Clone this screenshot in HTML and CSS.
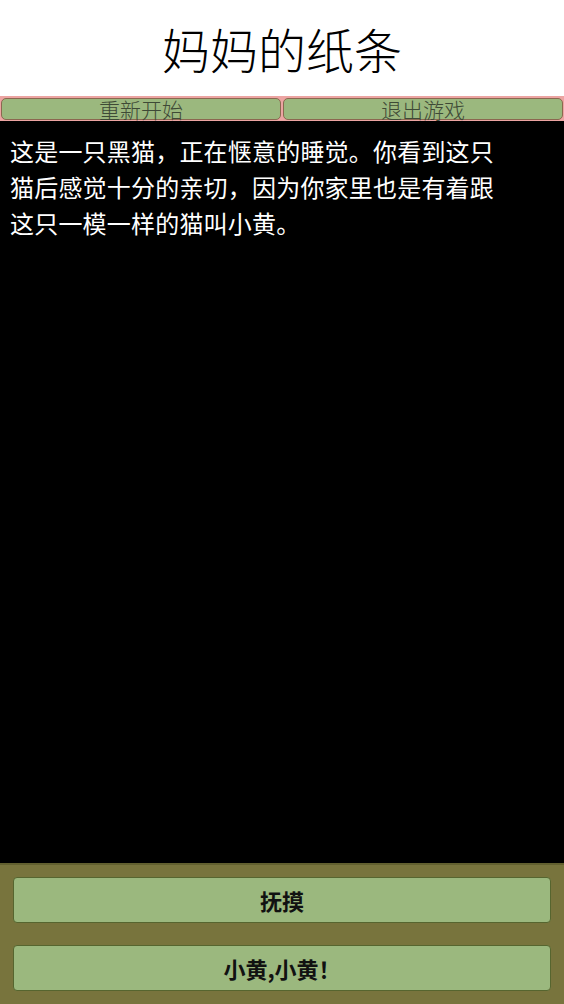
FILE: index.html
```html
<!DOCTYPE html>
<html lang="zh-CN">

<head>
    <meta charset="UTF-8">
    <meta name="viewport" content="width=device-width, initial-scale=1.0">
    <title>妈妈的纸条</title>
    <link rel="stylesheet" href="styles.css">
</head>

<body>
    <div class="game">
        <h1 class="title">妈妈的纸条</h1>
        <div class="top-bar">
            <button class="top-btn">重新开始</button>
            <button class="top-btn">退出游戏</button>
        </div>
        <div class="story">
            <p class="story-text">这是一只黑猫，正在惬意的睡觉。你看到这只猫后感觉十分的亲切，因为你家里也是有着跟这只一模一样的猫叫小黄。</p>
        </div>
        <div class="choices">
            <button class="choice-btn">抚摸</button>
            <button class="choice-btn">小黄,小黄！</button>
        </div>
    </div>
</body>

</html>
```

FILE: styles.css
```css
:root {
    --green: #9bb87e;
    --olive: #78743d;
    --pink: #eca4a2;
    --font-family: "Noto Sans CJK SC", "Noto Sans", sans-serif;
}

* {
    margin: 0;
    padding: 0;
    box-sizing: border-box;
}

body {
    font-family: var(--font-family);
    background: #000;
}

.game {
    height: 100vh;
    display: flex;
    flex-direction: column;
}

.title {
    background: #fff;
    height: 96px;
    display: flex;
    align-items: center;
    justify-content: center;
    font-size: 48px;
    font-weight: 300;
    color: #000;
}

.top-bar {
    background: var(--pink);
    display: flex;
    gap: 2px;
    padding: 2px 1px 1px;
}

.top-btn {
    flex: 1;
    height: 22px;
    background: var(--green);
    border: 1px solid #8b6850;
    border-radius: 5px;
    font-family: var(--font-family);
    font-size: 21px;
    line-height: 19px;
    color: #3e4a36;
    font-weight: 300;
}

.story {
    flex: 1;
    background: #000;
    padding: 12px 10px;
}

.story-text {
    width: 500px;
    color: #fff;
    font-size: 24px;
    line-height: 36px;
    letter-spacing: 0.2px;
    font-weight: 400;
}

.choices {
    background: var(--olive);
    border-top: 2px solid #62602f;
    padding: 12px 13px 13px;
    display: flex;
    flex-direction: column;
    gap: 22px;
}

.choice-btn {
    height: 46px;
    background: var(--green);
    border: 1px solid #56652f;
    border-radius: 4px;
    font-family: var(--font-family);
    font-size: 22px;
    font-weight: 700;
    color: #111;
}
```
